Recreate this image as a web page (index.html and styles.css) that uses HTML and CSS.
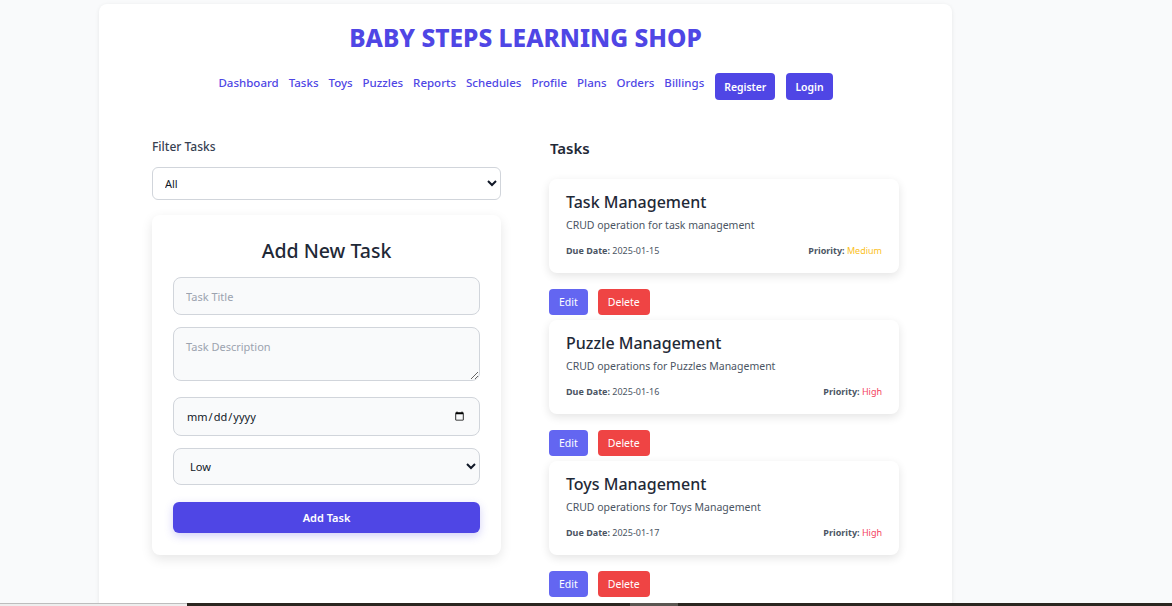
FILE: index.html
```html
<!DOCTYPE html>
<html lang="en">
<head>
<meta charset="utf-8">
<title>Baby Steps Learning Shop</title>
<link rel="stylesheet" href="styles.css">
</head>
<body>
<div class="page">
  <header class="header">
    <h1 class="brand">BABY STEPS LEARNING SHOP</h1>
    <nav class="nav">
      <a class="nav-link" href="#">Dashboard</a>
      <a class="nav-link" href="#">Tasks</a>
      <a class="nav-link" href="#">Toys</a>
      <a class="nav-link" href="#">Puzzles</a>
      <a class="nav-link" href="#">Reports</a>
      <a class="nav-link" href="#">Schedules</a>
      <a class="nav-link" href="#">Profile</a>
      <a class="nav-link" href="#">Plans</a>
      <a class="nav-link" href="#">Orders</a>
      <a class="nav-link" href="#">Billings</a>
      <button class="nav-btn">Register</button>
      <button class="nav-btn">Login</button>
    </nav>
  </header>

  <main class="grid">
    <section class="left">
      <label class="filter-label">Filter Tasks</label>
      <select class="filter-select">
        <option>All</option>
      </select>

      <form class="form-card">
        <h2 class="form-title">Add New Task</h2>
        <input class="field" type="text" placeholder="Task Title">
        <textarea class="field area" placeholder="Task Description"></textarea>
        <input class="field date" type="date">
        <select class="field sel">
          <option>Low</option>
        </select>
        <button class="submit" type="button">Add Task</button>
      </form>
    </section>

    <section class="right">
      <h2 class="tasks-title">Tasks</h2>
      <div class="task-list">
        <div class="task">
          <div class="task-card">
            <h3 class="task-name">Task Management</h3>
            <p class="task-desc">CRUD operation for task management</p>
            <div class="task-meta">
              <span><b>Due Date:</b> 2025-01-15</span>
              <span><b>Priority:</b> <span class="prio medium">Medium</span></span>
            </div>
          </div>
          <div class="task-actions">
            <button class="btn edit">Edit</button>
            <button class="btn delete">Delete</button>
          </div>
        </div>
        <div class="task">
          <div class="task-card">
            <h3 class="task-name">Puzzle Management</h3>
            <p class="task-desc">CRUD operations for Puzzles Management</p>
            <div class="task-meta">
              <span><b>Due Date:</b> 2025-01-16</span>
              <span><b>Priority:</b> <span class="prio high">High</span></span>
            </div>
          </div>
          <div class="task-actions">
            <button class="btn edit">Edit</button>
            <button class="btn delete">Delete</button>
          </div>
        </div>
        <div class="task">
          <div class="task-card">
            <h3 class="task-name">Toys Management</h3>
            <p class="task-desc">CRUD operations for Toys Management</p>
            <div class="task-meta">
              <span><b>Due Date:</b> 2025-01-17</span>
              <span><b>Priority:</b> <span class="prio high">High</span></span>
            </div>
          </div>
          <div class="task-actions">
            <button class="btn edit">Edit</button>
            <button class="btn delete">Delete</button>
          </div>
        </div>
      </div>
    </section>
  </main>
</div>
<div class="taskbar"><span class="tb-left"></span><span class="tb-dark"></span><span class="tb-mid"></span><span class="tb-dark2"></span></div>
</body>
</html>
```

FILE: styles.css
```css
* { box-sizing: border-box; }
html, body { margin: 0; padding: 0; }
body {
  background: #f9fafb;
  font-family: "Noto Sans", "Open Sans", sans-serif;
  color: #1f2937;
  overflow: hidden;
  height: 606px;
}
.page {
  width: 853px;
  margin: 4px 0 0 99px;
  background: #ffffff;
  border-radius: 8px;
  box-shadow: 0 1px 4px rgba(0,0,0,0.08);
  padding: 18px 53px 40px;
  min-height: 640px;
}
.header { display: flex; flex-direction: column; align-items: center; }
.brand {
  margin: 0;
  font-size: 24.5px;
  line-height: 32px;
  font-weight: 800;
  color: #4f46e5;
  letter-spacing: 0;
}
.nav {
  margin-top: 19px;
  display: flex;
  align-items: flex-start;
  gap: 10px;
}
.nav-link {
  color: #4f46e5;
  text-decoration: none;
  font-size: 11.5px;
  font-weight: 500;
  line-height: 20px;
}
.nav-btn {
  font-family: inherit;
  background: #4f46e5;
  color: #fff;
  border: 0;
  border-radius: 4px;
  height: 27px;
  padding: 0 9px;
  font-size: 10.4px;
  font-weight: 600;
  margin-left: 1px;
}
.grid {
  margin-top: 38px;
  display: grid;
  grid-template-columns: 349px 350px;
  column-gap: 48px;
}
.left { display: flex; flex-direction: column; }
.filter-label {
  font-size: 12px;
  line-height: 16px;
  font-weight: 500;
  color: #374151;
  padding-top: 1px;
}
.filter-select {
  margin-top: 12px;
  height: 33px;
  border: 1px solid #d1d5db;
  border-radius: 6px;
  background: #fff;
  padding: 0 8px;
  font-family: "Noto Sans", sans-serif;
  font-size: 11px;
  color: #111827;
}
.form-card {
  margin-top: 15px;
  background: #fff;
  border-radius: 8px;
  box-shadow: 0 4px 12px rgba(0,0,0,0.10);
  padding: 22px 21px 22px;
  display: flex;
  flex-direction: column;
}
.form-title {
  margin: 0 0 12px;
  text-align: center;
  font-size: 19.5px;
  line-height: 28px;
  font-weight: 500;
  color: #1f2937;
}
.field {
  width: 100%;
  border: 1px solid #d1d5db;
  border-radius: 8px;
  background: #f9fafb;
  font-family: "Noto Sans", sans-serif;
  font-size: 11px;
  color: #111827;
  padding: 0 12px;
  height: 38px;
  margin-bottom: 12px;
}
.field::placeholder { color: #9ca3af; }
.area {
  height: 54px;
  padding: 11px 12px;
  resize: vertical;
  margin-bottom: 16px;
  display: block;
}
.date { height: 39px; }
.sel { height: 37px; margin-bottom: 17px; font-size: 11px; }
.submit {
  font-family: inherit;
  height: 31px;
  border: 0;
  border-radius: 6px;
  background: #4f46e5;
  color: #fff;
  font-size: 11px;
  font-weight: 600;
  box-shadow: 0 3px 8px rgba(79,70,229,0.25);
}
.tasks-title {
  margin: 0 0 21px;
  font-size: 15px;
  line-height: 20px;
  font-weight: 600;
  color: #1f2937;
  padding-left: 1px;
}
.task-list { display: flex; flex-direction: column; gap: 5px; }
.task-card {
  background: #fff;
  border-radius: 8px;
  box-shadow: 0 3px 10px rgba(0,0,0,0.11);
  padding: 11px 17px 15px;
}
.task-name {
  margin: 0;
  font-size: 16px;
  line-height: 24px;
  font-weight: 500;
  color: #1f2937;
}
.task-desc {
  margin: 3px 0 0;
  font-size: 10.5px;
  line-height: 16px;
  color: #4b5563;
}
.task-meta {
  margin-top: 11px;
  display: flex;
  justify-content: space-between;
  font-size: 9px;
  line-height: 14px;
  color: #4b5563;
}
.task-meta b { font-weight: 700; }
.prio.medium { color: #fbbf24; }
.prio.high { color: #f43f5e; }
.task-actions { margin-top: 16px; display: flex; gap: 10px; }
.btn {
  font-family: inherit;
  height: 26px;
  border: 0;
  border-radius: 4px;
  color: #fff;
  font-size: 10.5px;
  padding: 0 10px;
}
.edit { background: #6366f1; }
.delete { background: #ef4444; }
.taskbar {
  position: fixed;
  left: 0; right: 0; bottom: 0;
  height: 3px;
  display: flex;
}
.tb-left { width: 187px; background: #eeeeee; border-top: 1px solid #bdbdbd; }
.tb-dark { width: 443px; background: #2b2620; }
.tb-mid { width: 48px; background: #5a5651; }
.tb-dark2 { flex: 1; background: #2b2620; }
```
